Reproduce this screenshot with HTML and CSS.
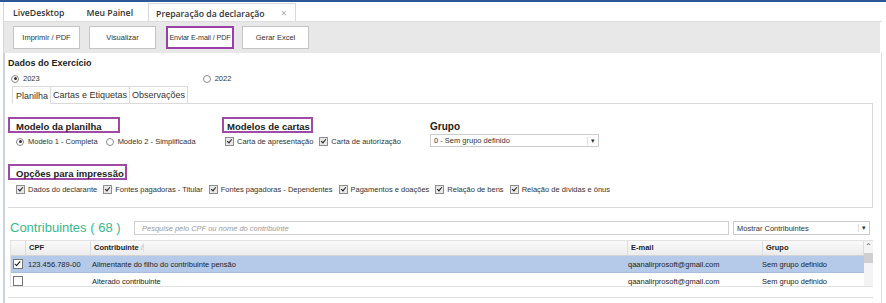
FILE: index.html
```html
<!DOCTYPE html>
<html>
<head>
  <title>Preparação da declaração</title>
  <link rel="stylesheet" href="styles.css">
</head>
<body>
  <div class="window">
    <div class="tabstrip">
      <span class="doc-tab">LiveDesktop</span>
      <span class="doc-tab">Meu Painel</span>
      <span class="doc-tab active">Preparação da declaração <span class="close">&times;</span></span>
    </div>

    <div class="toolbar">
      <button type="button" class="tool-btn">Imprimir / PDF</button>
      <button type="button" class="tool-btn">Visualizar</button>
      <button type="button" class="tool-btn marked">Enviar E-mail / PDF</button>
      <button type="button" class="tool-btn">Gerar Excel</button>
    </div>

    <div class="content">
      <h2 class="section-title">Dados do Exercício</h2>
      <div class="years">
        <label class="opt"><span class="radio checked"></span>2023</label>
        <label class="opt year2"><span class="radio"></span>2022</label>
      </div>

      <div class="page-tabs">
        <span class="page-tab active">Planilha</span>
        <span class="page-tab">Cartas e Etiquetas</span>
        <span class="page-tab">Observações</span>
        <span class="page-tab-fill"></span>
      </div>

      <div class="tab-panel">
        <div class="panel-row">
          <div class="group modelo">
            <div class="group-title marked">Modelo da planilha</div>
            <div class="opts">
              <label class="opt"><span class="radio checked"></span>Modelo 1 - Completa</label>
              <label class="opt"><span class="radio"></span>Modelo 2 - Simplificada</label>
            </div>
          </div>
          <div class="group cartas">
            <div class="group-title marked">Modelos de cartas</div>
            <div class="opts">
              <label class="opt"><span class="check checked"></span>Carta de apresentação</label>
              <label class="opt"><span class="check checked"></span>Carta de autorização</label>
            </div>
          </div>
          <div class="group grupo">
            <div class="group-title">Grupo</div>
            <div class="combo grupo-combo">
              <span class="combo-text">0 - Sem grupo definido</span>
              <span class="combo-arrow">&#9662;</span>
            </div>
          </div>
        </div>

        <div class="group impressao">
          <div class="group-title marked">Opções para impressão</div>
          <div class="opts print-opts">
            <label class="opt"><span class="check checked"></span>Dados do declarante</label>
            <label class="opt"><span class="check checked"></span>Fontes pagadoras - Titular</label>
            <label class="opt"><span class="check checked"></span>Fontes pagadoras - Dependentes</label>
            <label class="opt"><span class="check checked"></span>Pagamentos e doações</label>
            <label class="opt"><span class="check checked"></span>Relação de bens</label>
            <label class="opt"><span class="check checked"></span>Relação de dívidas e ônus</label>
          </div>
        </div>
      </div>

      <div class="list-panel">
        <div class="list-head">
          <span class="list-title">Contribuintes ( 68 )</span>
          <input type="text" class="search" placeholder="Pesquise pelo CPF ou nome do contribuinte">
          <div class="combo show-combo">
            <span class="combo-text">Mostrar Contribuintes</span>
            <span class="combo-arrow">&#9662;</span>
          </div>
        </div>

        <div class="grid">
          <div class="grid-body">
            <div class="grid-row header">
              <span class="c-sel"></span>
              <span class="c-cpf">CPF</span>
              <span class="c-name">Contribuinte <span class="sort">/</span></span>
              <span class="c-mail">E-mail</span>
              <span class="c-group">Grupo</span>
            </div>
            <div class="grid-row selected">
              <span class="c-sel"><span class="box checked"></span></span>
              <span class="c-cpf">123.456.789-00</span>
              <span class="c-name">Alimentante do filho do contribuinte pensão</span>
              <span class="c-mail">qaanalirprosoft@gmail.com</span>
              <span class="c-group">Sem grupo definido</span>
            </div>
            <div class="grid-row">
              <span class="c-sel"><span class="box"></span></span>
              <span class="c-cpf"></span>
              <span class="c-name">Alterado contribuinte</span>
              <span class="c-mail">qaanalirprosoft@gmail.com</span>
              <span class="c-group">Sem grupo definido</span>
            </div>
          </div>
          <div class="scrollbar">
            <span class="scroll-up">&#8963;</span>
            <span class="thumb"></span>
          </div>
        </div>
      </div>
    </div>
  </div>
</body>
</html>
```

FILE: styles.css
```css
body {
  margin: 0;
  padding: 0;
  background-color: #ffffff;
  font-family: "Liberation Sans", Arial, sans-serif;
  color: #222222;
}

.window {
  width: 886px;
  height: 303px;
  border-top: 2px solid #2b5797;
  box-sizing: border-box;
  overflow: hidden;
}

/* tabs on top */
.tabstrip {
  display: flex;
  align-items: flex-end;
  height: 19px;
  margin-left: 3px;
  margin-right: 4px;
  padding-left: 1px;
  border-left: 1px solid #d6d6d6;
  border-bottom: 1px solid #dcdcdc;
  background-color: #ffffff;
}

.doc-tab {
  font-family: "Open Sans", sans-serif;
  font-weight: 600;
  font-size: 8.7px;
  color: #333333;
  padding: 1px 14px 0 8px;
  height: 18px;
  line-height: 18px;
  box-sizing: border-box;
  white-space: nowrap;
}

.doc-tab.active {
  border: 1px solid #d8d8d8;
  border-bottom: none;
  margin-left: 1px;
  padding: 1px 8px 0 7px;
  line-height: 17px;
}

.close {
  color: #aaaaaa;
  font-weight: 400;
  font-size: 10px;
  margin-left: 14px;
}

/* toolbar */
.toolbar {
  display: flex;
  gap: 9px;
  height: 31px;
  margin-left: 3px;
  margin-right: 6px;
  padding: 4px 0 0 9px;
  box-sizing: border-box;
  background-color: #e8e8e8;
  border-left: 1px solid #d6d6d6;
}

.tool-btn {
  width: 67px;
  height: 23px;
  background-color: #ffffff;
  border: 1px solid #c4c4c4;
  border-radius: 0;
  font-family: "Liberation Sans", Arial, sans-serif;
  font-size: 7.5px;
  color: #333333;
  padding: 0;
  white-space: nowrap;
}

.tool-btn.marked {
  border: 2px solid #9b3ea8;
  width: 68px;
  margin-left: 1px;
  margin-right: -1px;
  font-size: 7.2px;
  letter-spacing: -0.1px;
}

/* main area */
.content {
  margin-left: 3px;
  margin-right: 4px;
  padding: 5px 0 0 3px;
  border-left: 2px solid #c9d2de;
  border-right: 1px solid #dcdcdc;
  height: 252px;
}

.section-title {
  font-size: 9px;
  font-weight: bold;
  margin: 0;
  color: #222222;
  line-height: 11px;
}

.years {
  display: flex;
  margin-top: 5px;
  padding-left: 3px;
}

.year2 {
  margin-left: 163px;
}

.opt {
  display: inline-flex;
  align-items: center;
  font-family: "Liberation Sans", Arial, sans-serif;
  font-size: 7.5px;
  color: #333333;
  white-space: nowrap;
}

.radio {
  width: 6px;
  height: 6px;
  border: 1px solid #8a8a8a;
  border-radius: 50%;
  margin-right: 4px;
  position: relative;
  background-color: #ffffff;
}

.radio.checked::after {
  content: "";
  position: absolute;
  left: 1.5px;
  top: 1.5px;
  width: 3px;
  height: 3px;
  border-radius: 50%;
  background-color: #333333;
}

.check {
  width: 7px;
  height: 7px;
  border: 1px solid #8e8e8e;
  background-color: #e8e8e8;
  margin-right: 3px;
  position: relative;
}

.check.checked::after {
  content: "";
  position: absolute;
  left: 2px;
  top: 0px;
  width: 2px;
  height: 4px;
  border: solid #222222;
  border-width: 0 1.5px 1.5px 0;
  transform: rotate(40deg);
}

/* inner tabs */
.page-tabs {
  display: flex;
  margin-top: 3px;
  height: 18px;
  padding-left: 4px;
}

.page-tab {
  font-family: "Liberation Sans", Arial, sans-serif;
  font-size: 9px;
  color: #333333;
  padding: 0 2px;
  line-height: 17px;
  border: 1px solid #dadada;
  border-left: none;
  border-bottom: 1px solid #dadada;
  background-color: #ffffff;
  white-space: nowrap;
}

.page-tab:first-child {
  border-left: 1px solid #dadada;
}

.page-tab.active {
  border-bottom-color: #ffffff;
  padding: 1px 2px 0 3px;
}

.page-tab-fill {
  flex: 1;
  border-bottom: 1px solid #dadada;
  margin-right: 8px;
}

.tab-panel {
  height: 104px;
  border-right: 1px solid #dadada;
  border-bottom: 1px solid #dadada;
  margin-right: 8px;
  padding: 13px 0 0 0;
  box-sizing: border-box;
}

.panel-row {
  display: flex;
  height: 47px;
}

.group-title {
  font-family: "Liberation Sans", Arial, sans-serif;
  font-weight: bold;
  font-size: 9.5px;
  color: #222222;
  height: 16px;
  line-height: 15px;
  padding-left: 6px;
  box-sizing: border-box;
  white-space: nowrap;
}

.group-title.marked {
  border: 2px solid #a04aa8;
}

.modelo .group-title {
  width: 112px;
}

.cartas .group-title {
  width: 91px;
  padding-left: 3px;
}

.modelo {
  width: 214px;
}

.cartas {
  width: 208px;
}

.grupo .group-title {
  margin-top: 2px;
  padding-left: 0;
  height: 15px;
  font-size: 10px;
}

.opts {
  display: flex;
  gap: 8px;
  margin-top: 4px;
  padding-left: 8px;
}

.cartas .opts {
  padding-left: 3px;
  gap: 6px;
}

.print-opts {
  gap: 6px;
  margin-top: 5px;
}

.impressao .group-title {
  width: 119px;
}

.combo {
  display: flex;
  align-items: center;
  border: 1px solid #cccccc;
  background-color: #ffffff;
  height: 13px;
  box-sizing: border-box;
  font-size: 7.5px;
  color: #333333;
  white-space: nowrap;
}

.combo-text {
  flex: 1;
  padding-left: 3px;
}

.combo-arrow {
  width: 10px;
  text-align: center;
  font-size: 7px;
  border-left: 1px solid #dddddd;
}

.grupo-combo {
  width: 169px;
}

/* contribuintes list */
.list-panel {
  margin-right: 8px;
  height: 90px;
  border-bottom: 1px solid #dadada;
  padding: 13px 0 0 2px;
  box-sizing: border-box;
}

.list-head {
  display: flex;
  align-items: center;
  height: 14px;
}

.list-title {
  font-family: "Liberation Sans", Arial, sans-serif;
  font-size: 13px;
  color: #36b88e;
  width: 124px;
  line-height: 14px;
  white-space: nowrap;
}

.search {
  width: 595px;
  height: 14px;
  box-sizing: border-box;
  border: 1px solid #d0d0d0;
  font-size: 7.5px;
  font-style: italic;
  padding: 0 0 0 7px;
  font-family: "Liberation Sans", Arial, sans-serif;
}

.search::placeholder {
  color: #9a9a9a;
}

.show-combo {
  width: 137px;
  height: 14px;
  margin-left: 4px;
}

.grid {
  display: flex;
  margin-top: 5px;
  border: 1px solid #e2e2e2;
  width: 863px;
  height: 47px;
  box-sizing: border-box;
}

.grid-body {
  flex: 1;
}

.grid-row {
  display: flex;
  height: 16px;
  font-size: 7.5px;
  color: #222222;
  align-items: center;
  border-bottom: 1px solid #ffffff;
  white-space: nowrap;
}

.grid-row.header {
  height: 14px;
  font-weight: bold;
  font-size: 7.5px;
  background: linear-gradient(#fafafa, #ececec);
  border-bottom: 1px solid #d4d4d4;
}

.grid-row.header span {
  border-right: 1px solid #dddddd;
  height: 14px;
  line-height: 14px;
}

.grid-row.selected {
  background-color: #b5cae8;
  border-bottom: 1px solid #a9bedc;
}

.c-sel {
  width: 14px;
  flex-shrink: 0;
  display: flex;
  justify-content: center;
}

.c-cpf {
  width: 61px;
  padding-left: 3px;
}

.c-name {
  width: 533px;
  padding-left: 3px;
}

.sort {
  color: #aaaaaa;
  font-weight: normal;
}

.c-mail {
  width: 131px;
  padding-left: 3px;
}

.c-group {
  width: 97px;
  padding-left: 3px;
}

.box {
  width: 8px;
  height: 8px;
  border: 1px solid #777777;
  background-color: #ffffff;
  position: relative;
}

.box.checked::after {
  content: "";
  position: absolute;
  left: 2px;
  top: 0px;
  width: 2px;
  height: 5px;
  border: solid #111111;
  border-width: 0 1.5px 1.5px 0;
  transform: rotate(40deg);
}

.scrollbar {
  width: 12px;
  display: flex;
  flex-direction: column;
  align-items: center;
  background-color: #f4f4f4;
}

.scroll-up {
  font-size: 8px;
  height: 12px;
  line-height: 12px;
  color: #555555;
}

.thumb {
  width: 9px;
  height: 10px;
  background-color: #cfcfcf;
}
```
